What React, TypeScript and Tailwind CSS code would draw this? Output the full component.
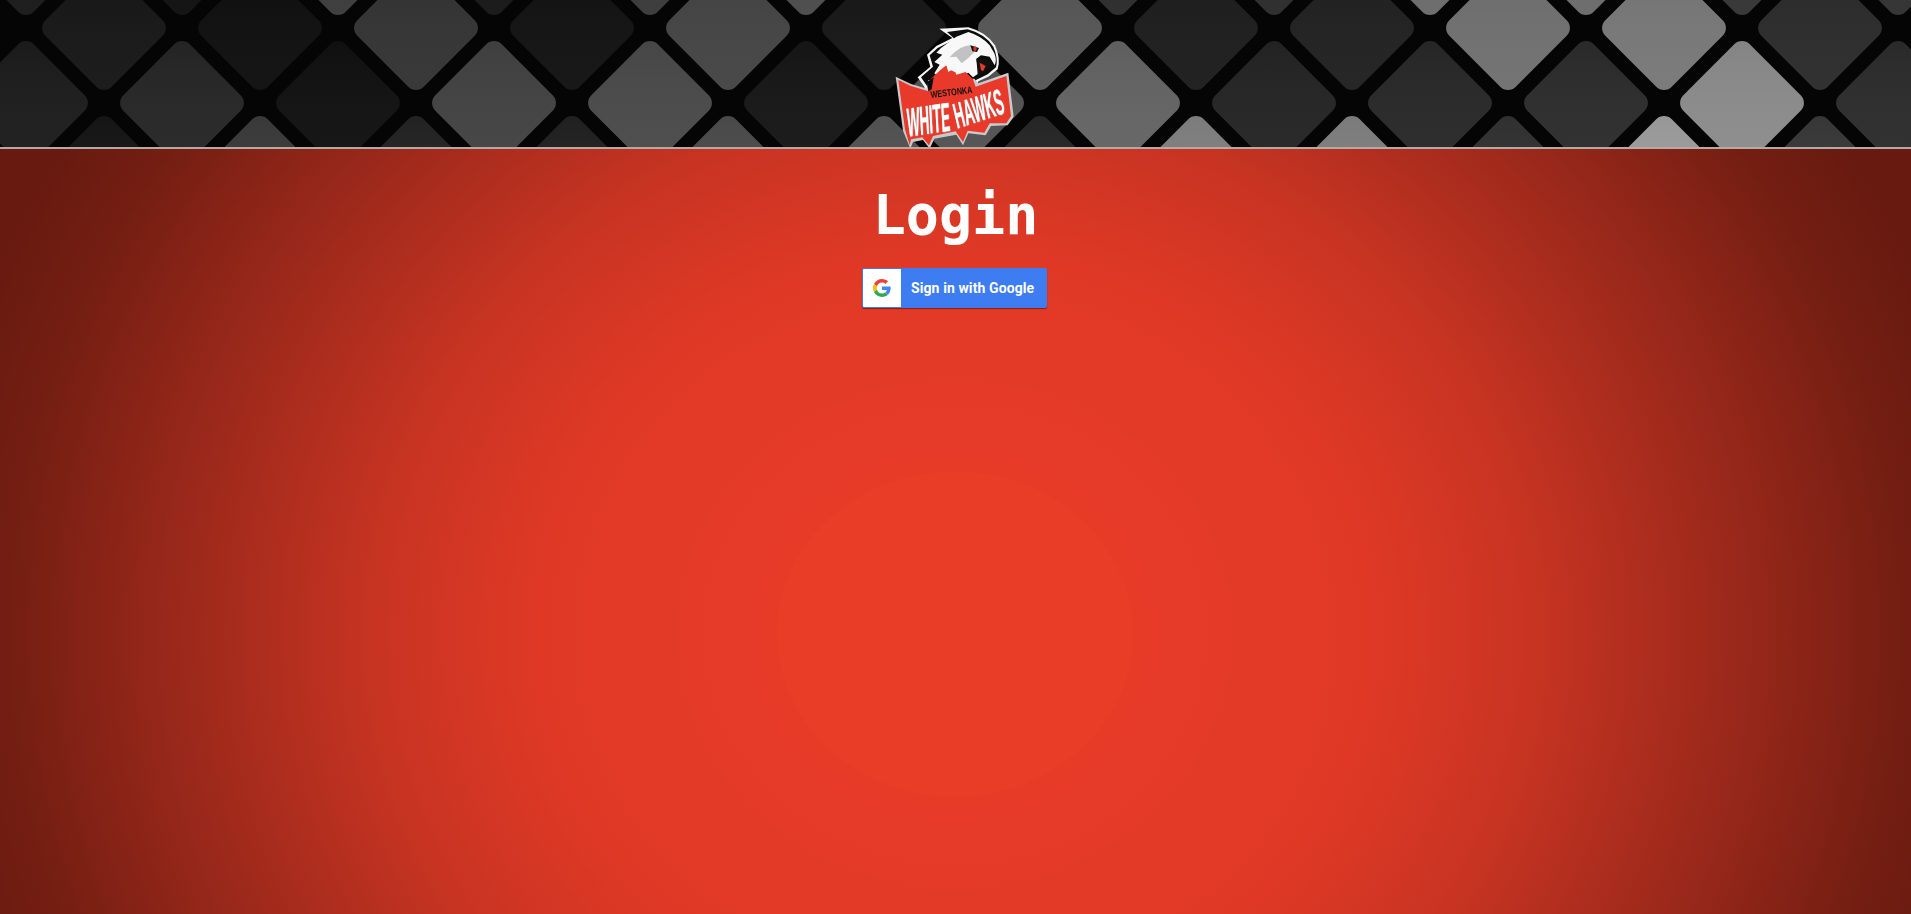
const rowTop = ["#181818", "#0e0e0e", "#3a3a3a", "#151515", "#383838", "#4a4a4a", "#141414", "#2a2a2a", "#2a2a2a", "#6a6a6a", "#6a6a6a", "#333333", "#303030"];
const rowA = ["#161616", "#0e0e0e", "#333333", "#111111", "#444444", "#161616", "#565656", "#1c1c1c", "#202020", "#707070", "#787878", "#2b2b2b"];
const rowB = ["#1c1c1c", "#262626", "#101010", "#424242", "#4a4a4a", "#161616", "#525252", "#646464", "#242424", "#282828", "#2c2c2c", "#8c8c8c", "#2c2c2c"];
const rowBottom = ["#161616", "#3c3c3c", "#242424", "#222222", "#4d4d4d", "#555555", "#282828", "#838383", "#828282", "#333333", "#a0a0a0", "#3a3a3a"];

const rows = [
  { y: -47, x0: 26, shades: rowTop },
  { y: 28, x0: 104, shades: rowA },
  { y: 103, x0: 26, shades: rowB },
  { y: 178, x0: 104, shades: rowBottom },
];

const TilePattern = () => (
  <svg className="absolute inset-0" width="1911" height="147" viewBox="0 0 1911 147">
    <defs>
      <linearGradient id="sheen" x1="0" y1="0" x2="1" y2="1">
        <stop offset="0" stopColor="#000" stopOpacity="0.06" />
        <stop offset="1" stopColor="#fff" stopOpacity="0.03" />
      </linearGradient>
    </defs>
    {rows.map((row) =>
      row.shades.map((shade, i) => {
        const cx = row.x0 + i * 156;
        return (
          <g key={`${row.y}-${i}`} transform={`rotate(45 ${cx} ${row.y})`}>
            <rect x={cx - 47} y={row.y - 47} width="94" height="94" rx="11" fill={shade} />
            <rect x={cx - 47} y={row.y - 47} width="94" height="94" rx="11" fill="url(#sheen)" />
          </g>
        );
      })
    )}
  </svg>
);

const Logo = () => (
  <svg width="130" height="130" viewBox="0 0 390 390" className="relative mt-5 -mb-[3px] shrink-0 overflow-visible blur-[0.4px]">
    {/* head */}
    <path d="M145 26 L232 22 Q285 36 312 76 Q330 116 320 148 L292 170 L262 184 L250 230 L110 240 L100 200 L80 172 L118 140 L108 104 L136 78 L184 54 Z" fill="#f6f6f6" />
    <path d="M168 36 L230 28 Q282 42 307 80 Q322 114 315 142 L290 163 L255 180 L245 230 L115 240 L108 198 L90 172 L126 140 L116 106 L140 84 L192 58 Z" fill="#0c0c0c" />
    <path d="M150 84 L196 50 L232 36 Q272 48 296 76 L310 100 Q318 120 311 136 L296 110 L270 106 L256 116 L260 162 L246 172 L232 158 L205 172 L178 160 L150 176 L130 160 L146 134 L130 126 L154 104 L136 98 Z" fill="#f8f8f8" />
    <path d="M176 112 Q206 76 240 76 L250 96 L232 114 L212 130 L196 110 Z" fill="#c2c2c4" />
    <path d="M238 76 L264 84 L258 96 L244 94 Z" fill="#111" />
    <ellipse cx="252" cy="86" rx="5" ry="7" fill="#d8321f" />
    <path d="M256 118 Q282 110 300 128 L284 156 L264 164 Z" fill="#111" />
    <path d="M266 128 L284 138 L276 154 L270 150 Z" fill="#e8392a" />
    {/* banner */}
    <path d="M14 170 L60 192 L108 206 L112 180 L250 176 L262 190 L352 158 L368 290 L350 316 L300 318 L284 346 L232 340 L216 376 L196 344 L130 356 L116 386 L96 360 L66 366 L58 386 L36 332 Z" fill="#c9c9c9" />
    <path d="M22 180 L60 198 L112 214 L120 176 L148 150 L166 136 L172 156 L190 144 L196 164 L224 156 L246 178 L254 200 L346 168 L360 288 L346 310 L296 310 L280 338 L230 332 L216 366 L194 334 L126 348 L114 376 L94 352 L60 358 L56 376 L42 328 Z" fill="#e8392a" />
    <path d="M166 136 L190 112 L180 142 L208 128 L200 160 L178 150 Z" fill="#f8f8f8" />
    <path d="M108 186 L128 172 L122 208 L112 214 Z" fill="#0c0c0c" />
    <text transform="translate(120 234) rotate(-7)" fontFamily="Liberation Sans, sans-serif" fontWeight="700" fontSize="29" textLength="126" lengthAdjust="spacingAndGlyphs" fill="#111">WESTONKA</text>
    <g className="drop-shadow-[1px_1px_0_#b5b5b5]">
      <text transform="translate(50 350) rotate(-8) skewX(-5)" fontFamily="Liberation Sans, sans-serif" fontWeight="700" fontSize="122" textLength="130" lengthAdjust="spacingAndGlyphs" fill="#fff">WHITE</text>
      <text transform="translate(198 326) rotate(-18) skewX(-5)" fontFamily="Liberation Sans, sans-serif" fontWeight="700" fontSize="108" textLength="154" lengthAdjust="spacingAndGlyphs" fill="#fff">HAWKS</text>
    </g>
  </svg>
);

const GoogleG = () => (
  <svg width="18" height="18" viewBox="0 0 48 48">
    <path fill="#EA4335" d="M24 9.5c3.54 0 6.71 1.22 9.21 3.6l6.85-6.85C35.9 2.38 30.47 0 24 0 14.62 0 6.51 5.38 2.56 13.22l7.98 6.19C12.43 13.72 17.74 9.5 24 9.5z" />
    <path fill="#4285F4" d="M46.98 24.55c0-1.57-.15-3.09-.38-4.55H24v9.02h12.94c-.58 2.96-2.26 5.48-4.78 7.18l7.73 6c4.51-4.18 7.09-10.36 7.09-17.65z" />
    <path fill="#FBBC05" d="M10.53 28.59c-.48-1.45-.76-2.99-.76-4.59s.27-3.14.76-4.59l-7.98-6.19C.92 16.46 0 20.12 0 24c0 3.88.92 7.54 2.56 10.78l7.97-6.19z" />
    <path fill="#34A853" d="M24 48c6.48 0 11.93-2.13 15.89-5.81l-7.73-6c-2.15 1.45-4.92 2.3-8.16 2.3-6.26 0-11.57-4.22-13.47-9.91l-7.98 6.19C6.51 42.62 14.62 48 24 48z" />
  </svg>
);

export default function App() {
  return (
    <div className="flex h-screen flex-col overflow-hidden font-['Roboto',sans-serif]">
      <header className="relative flex h-[149px] shrink-0 justify-center overflow-hidden border-b-2 border-[#b3aaa6] bg-[#050505]">
        <TilePattern />
        <Logo />
      </header>

      <main className="flex flex-1 flex-col items-center bg-[radial-gradient(ellipse_1040px_950px_at_955px_485px,#ea3d28_0,#ea3d28_17%,#e73b28_17.2%,#df3926_40%,#c93422_55%,#9c291b_74%,#741e12_91%,#681a10_100%)]">
        <h1 className="mt-[31px] h-[88px] font-['DejaVu_Sans_Mono',monospace] text-[55px] leading-[70px] font-bold text-white">
          Login
        </h1>
        <button className="mr-[2px] flex h-10 w-[185px] items-stretch rounded-[2px] bg-[#3e7cf1] p-px font-bold shadow-[0_1px_1px_rgba(90,10,0,0.6)]">
          <span className="flex w-[38px] items-center justify-center rounded-l-[1px] bg-white">
            <GoogleG />
          </span>
          <span className="ml-[10px] self-center text-sm tracking-[0.1px] whitespace-nowrap text-white">Sign in with Google</span>
        </button>
      </main>
    </div>
  );
}
